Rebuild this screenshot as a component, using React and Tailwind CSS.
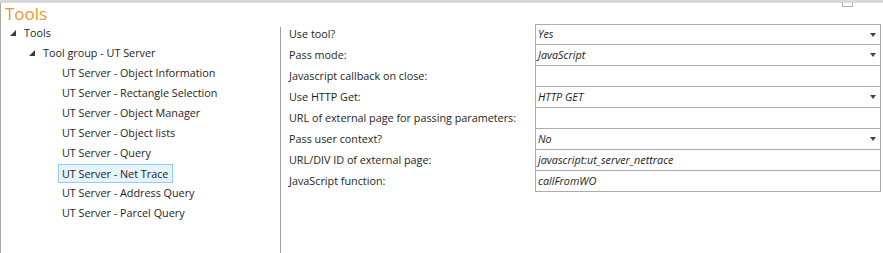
import React from 'react'

const font = { fontFamily: '"Open Sans", "Noto Sans", sans-serif' }

const tools = [
  'UT Server - Object Information',
  'UT Server - Rectangle Selection',
  'UT Server - Object Manager',
  'UT Server - Object lists',
  'UT Server - Query',
  'UT Server - Net Trace',
  'UT Server - Address Query',
  'UT Server - Parcel Query',
]

const fields = [
  { label: 'Use tool?', value: 'Yes', select: true },
  { label: 'Pass mode:', value: 'JavaScript', select: true },
  { label: 'Javascript callback on close:', value: '' },
  { label: 'Use HTTP Get:', value: 'HTTP GET', select: true },
  { label: 'URL of external page for passing parameters:', value: '' },
  { label: 'Pass user context?', value: 'No', select: true },
  { label: 'URL/DIV ID of external page:', value: 'javascript:ut_server_nettrace' },
  { label: 'JavaScript function:', value: 'callFromWO' },
]

function Expander() {
  return (
    <svg width="6" height="6" viewBox="0 0 6 6" className="shrink-0">
      <polygon points="6,0 6,6 0,6" fill="#3c3c3c" />
    </svg>
  )
}

function Caret() {
  return (
    <svg width="6" height="4" viewBox="0 0 6 4" className="shrink-0">
      <polygon points="0,0 6,0 3,4" fill="#444" />
    </svg>
  )
}

export default function App() {
  return (
    <div className="relative w-[883px] h-[253px] overflow-hidden bg-white border-t-[3px] border-[#d9d9d9] text-[10.8px] text-[#1e1e1e]" style={font}>
      {/* little handle poking out of the top bar */}
      <div className="absolute top-[-3px] left-[842px] w-[11px] h-[7px] border border-[#b4b4b4] bg-white" />

      <div className="h-full border-l border-[#a8a8a8] flex flex-col">
        <div className="h-[21px] pl-[4px] text-[17px] leading-[21px] text-[#ef9430]">Tools</div>

        <div className="flex flex-1">
          {/* tree */}
          <div className="w-[279px] shrink-0 -mt-[1px]">
            <div className="h-[20px] flex items-center gap-[8px] pl-[9px]">
              <Expander />
              <span>Tools</span>
            </div>
            <div className="h-[20px] flex items-center gap-[8px] pl-[28px]">
              <Expander />
              <span>Tool group - UT Server</span>
            </div>
            {tools.map((t) => (
              <div key={t} className="h-[20px] flex items-center pl-[57px]">
                {t === 'UT Server - Net Trace' ? (
                  <span className="h-[19px] leading-[17px] pl-[3px] pr-[4px] bg-[#e5f3fb] border border-[#8fd0f0]">{t}</span>
                ) : (
                  <span className="px-[4px]">{t}</span>
                )}
              </div>
            ))}
          </div>

          {/* properties */}
          <div className="flex-1 mt-[3px] border-l border-[#a0a0a0]">
            <div className="-mt-[3px] grid grid-cols-[254px_346px]">
              {fields.map((f, i) => (
                <React.Fragment key={f.label}>
                  <div className="h-[21px] flex items-center pl-[8px] whitespace-nowrap">{f.label}</div>
                  <div
                    className={
                      'h-[21px] flex items-center justify-between pl-[2px] pr-[4px] border-x border-b border-[#acacac] italic ' +
                      (i === 0 ? 'border-t' : '')
                    }
                  >
                    <span>{f.value}</span>
                    {f.select && <Caret />}
                  </div>
                </React.Fragment>
              ))}
            </div>
          </div>
        </div>
      </div>
    </div>
  )
}
